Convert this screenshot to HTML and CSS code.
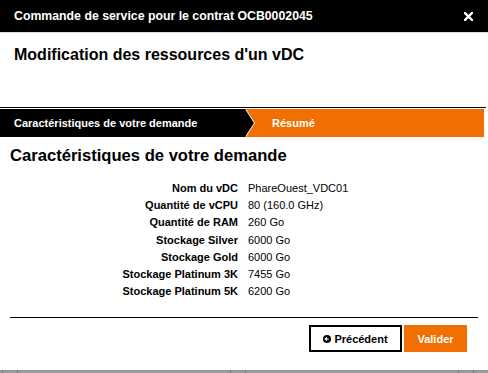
FILE: index.html
```html
<!DOCTYPE html>
<html lang="fr">
<head>
  <meta charset="UTF-8">
  <title>Commande de service</title>
  <link rel="stylesheet" href="styles.css">
</head>
<body>
<div class="modal">
  <!-- Modal Header -->
  <div class="modal-header">
    <span class="modal-title">Commande de service pour le contrat OCB0002045</span>
    <span class="close-btn">
      <svg width="9" height="9" viewBox="0 0 9 9"><path d="M1 1L8 8M8 1L1 8" stroke="#fff" stroke-width="2.4" stroke-linecap="square"/></svg>
    </span>
  </div>

  <!-- Sub Header -->
  <div class="modal-sub">
    <h1 class="page-title">Modification des ressources d'un vDC</h1>
  </div>

  <!-- Steps -->
  <div class="steps">
    <div class="step step-done">Caractéristiques de votre demande</div>
    <div class="step step-current">Résumé</div>
  </div>

  <!-- Content -->
  <div class="content">
    <h2 class="section-title">Caractéristiques de votre demande</h2>
    <dl class="recap">
      <dt>Nom du vDC</dt><dd>PhareOuest_VDC01</dd>
      <dt>Quantité de vCPU</dt><dd>80 (160.0 GHz)</dd>
      <dt>Quantité de RAM</dt><dd>260 Go</dd>
      <dt>Stockage Silver</dt><dd>6000 Go</dd>
      <dt>Stockage Gold</dt><dd>6000 Go</dd>
      <dt>Stockage Platinum 3K</dt><dd>7455 Go</dd>
      <dt>Stockage Platinum 5K</dt><dd>6200 Go</dd>
    </dl>
    <div class="divider"></div>
    <div class="actions">
      <button class="btn btn-outline">
        <svg width="8" height="8" viewBox="0 0 8 8"><circle cx="4" cy="4" r="4" fill="#000"/><path d="M5.8 4H2.4M3.9 2.3L2.2 4l1.7 1.7" stroke="#fff" stroke-width="1.2" fill="none"/></svg>
        Précédent
      </button>
      <button class="btn btn-primary">Valider</button>
    </div>
  </div>

  <!-- Scrollbar strip -->
  <div class="scroll-strip">
    <span class="tick"></span><span class="tick"></span>
    <span class="gap"></span>
    <span class="tick"></span><span class="tick"></span>
    <span class="gap"></span>
    <span class="tick"></span><span class="tick"></span>
  </div>
</div>
</body>
</html>
```

FILE: styles.css
```css
/* Base */
html, body {
  margin: 0;
  padding: 0;
  background: #fff;
  font-family: "Liberation Sans", Arial, sans-serif;
  color: #000;
}

.modal {
  width: 488px;
  height: 373px;
  display: flex;
  flex-direction: column;
  overflow: hidden;
}

/* Header bar */
.modal-header {
  height: 32px;
  background: #000;
  border-bottom: 1px solid #ddd;
  display: flex;
  align-items: center;
  justify-content: space-between;
  padding: 0 15px 0 14px;
}

.modal-title {
  color: #fff;
  font-size: 12.3px;
  font-weight: bold;
}

.close-btn {
  display: flex;
  align-items: center;
  margin-top: 1px;
}

/* Sub header */
.modal-sub {
  height: 74px;
  padding: 0 14px;
}

.page-title {
  margin: 0;
  padding-top: 12px;
  font-size: 16px;
  line-height: 20px;
  font-weight: bold;
}

/* Steps */
.steps {
  border-top: 1px solid #000;
  padding-top: 1px;
  display: flex;
  height: 28px;
  margin-right: 2px;
}

.step {
  font-size: 11px;
  font-weight: bold;
  color: #fff;
  display: flex;
  align-items: center;
}

.step-done {
  position: relative;
  width: 231px;
  padding-left: 14px;
  background: #000;
  z-index: 1;
}

/* Chevron at the end of the finished step */
.step-done::before,
.step-done::after {
  content: "";
  position: absolute;
  top: 0;
  border-top: 14px solid transparent;
  border-bottom: 14px solid transparent;
}

.step-done::before {
  left: calc(100% + 1px);
  border-left: 9px solid #fff;
}

.step-done::after {
  left: 100%;
  border-left: 9px solid #000;
}

.step-current {
  flex: 1;
  background: #f16e00;
  padding-left: 27px;
  margin-right: 2px;
}

/* Content */
.content {
  flex: 1;
  padding: 0 10px;
}

.section-title {
  margin: 9px 0 0 0;
  font-size: 16.6px;
  line-height: 20px;
  font-weight: bold;
}

.recap {
  display: grid;
  grid-template-columns: 228px 1fr;
  column-gap: 10px;
  margin: 14px 0 0 0;
  font-size: 11px;
  line-height: 17.2px;
}

.recap dt {
  text-align: right;
  font-weight: bold;
}

.recap dd {
  margin: 0;
}

.divider {
  height: 1px;
  background: #000;
  margin-top: 17px;
}

.actions {
  display: flex;
  justify-content: flex-end;
  gap: 2px;
  margin-top: 7px;
  padding-right: 11px;
}

.btn {
  height: 27px;
  font-family: "Liberation Sans", Arial, sans-serif;
  font-size: 11px;
  font-weight: bold;
  display: flex;
  align-items: center;
  justify-content: center;
  gap: 3px;
  padding: 0;
  cursor: pointer;
}

.btn-outline {
  width: 93px;
  background: #fff;
  color: #000;
  border: 2px solid #000;
}

.btn-primary {
  width: 63px;
  background: #f16e00;
  color: #fff;
  border: 0;
}

/* Bottom scrollbar strip */
.scroll-strip {
  height: 3px;
  background: #9a9a9a;
  display: flex;
  padding-left: 2px;
}

.tick {
  width: 1px;
  background: #7a7a7a;
  margin-right: 14px;
}

.gap {
  width: 205px;
}
```
